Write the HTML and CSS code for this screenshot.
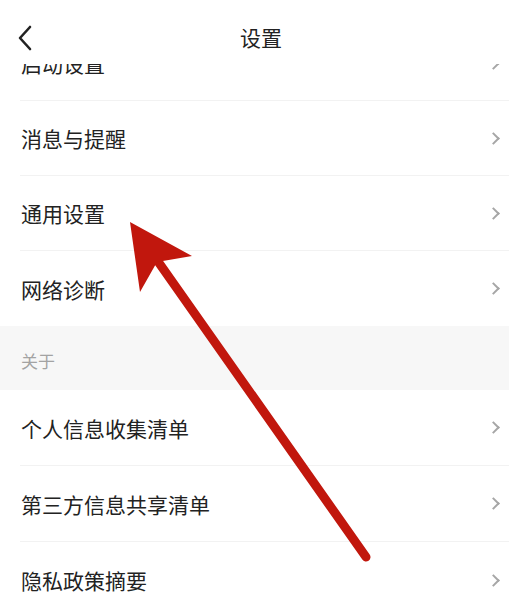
FILE: index.html
```html
<!DOCTYPE html>
<html lang="zh-CN">
<head>
    <meta charset="UTF-8">
    <meta name="viewport" content="width=device-width, initial-scale=1.0">
    <title>设置</title>
    <link rel="stylesheet" href="styles.css">
</head>
<body>
<div class="page">
    <div class="header">
        <div class="back">
            <svg width="16" height="26" viewBox="0 0 16 26">
                <path d="M13 2 L3 13 L13 24" fill="none" stroke="#222" stroke-width="2.6" stroke-linecap="round" stroke-linejoin="round"/>
            </svg>
        </div>
        <div class="title">设置</div>
        <div></div>
    </div>

    <div class="list">
        <div class="scroll">
            <div class="row"><div class="row-inner"><span>启动设置</span><i class="chev"></i></div></div>
            <div class="row"><div class="row-inner"><span>消息与提醒</span><i class="chev"></i></div></div>
            <div class="row"><div class="row-inner"><span>通用设置</span><i class="chev"></i></div></div>
            <div class="row"><div class="row-inner no-line"><span>网络诊断</span><i class="chev"></i></div></div>

            <div class="section-title">关于</div>

            <div class="row tall"><div class="row-inner"><span>个人信息收集清单</span><i class="chev"></i></div></div>
            <div class="row tall"><div class="row-inner"><span>第三方信息共享清单</span><i class="chev"></i></div></div>
            <div class="row tall"><div class="row-inner no-line"><span>隐私政策摘要</span><i class="chev"></i></div></div>
        </div>
    </div>

    <!-- red annotation arrow -->
    <svg class="arrow" width="509" height="595" viewBox="0 0 509 595">
        <line x1="366" y1="557" x2="152" y2="253" stroke="#c1170d" stroke-width="9" stroke-linecap="round"/>
        <polygon points="130,222 192,256 157,262 140,292" fill="#c1170d"/>
    </svg>
</div>
</body>
</html>
```

FILE: styles.css
```css
body {
    margin: 0;
    background-color: #ffffff;
    font-family: "Noto Sans CJK SC", "Noto Sans", sans-serif;
    color: #222222;
}

.page {
    position: relative;
    width: 509px;
    height: 595px;
    overflow: hidden;
}

.header {
    height: 64px;
    box-sizing: border-box;
    padding-top: 11px;
    display: grid;
    grid-template-columns: 60px 1fr 47px;
    align-items: center;
    background-color: #ffffff;
    position: relative;
    z-index: 1;
}

.back {
    padding-left: 17px;
    display: flex;
    align-items: center;
}

.title {
    text-align: center;
    font-size: 21px;
    padding-bottom: 2px;
}

.list {
    height: 531px;
    overflow: hidden;
}

.scroll {
    margin-top: -38px;
}

.row {
    height: 75px;
    padding-left: 20px;
}

.row.tall {
    height: 76px;
}

.row-inner {
    height: 100%;
    box-sizing: border-box;
    display: flex;
    align-items: center;
    justify-content: space-between;
    padding-left: 1px;
    padding-right: 11px;
    border-bottom: 1px solid #f2f2f2;
    font-size: 21px;
}

.row-inner.no-line {
    border-bottom: none;
}

.chev {
    width: 7px;
    height: 7px;
    border-top: 2px solid #a6a6a6;
    border-right: 2px solid #a6a6a6;
    transform: rotate(45deg);
}

.section-title {
    height: 64px;
    background-color: #f7f7f7;
    color: #a3a3a3;
    font-size: 17px;
    padding-left: 21px;
    display: flex;
    align-items: center;
    padding-top: 5px;
    box-sizing: border-box;
}

.arrow {
    position: absolute;
    left: 0;
    top: 0;
    pointer-events: none;
    z-index: 2;
}
```
